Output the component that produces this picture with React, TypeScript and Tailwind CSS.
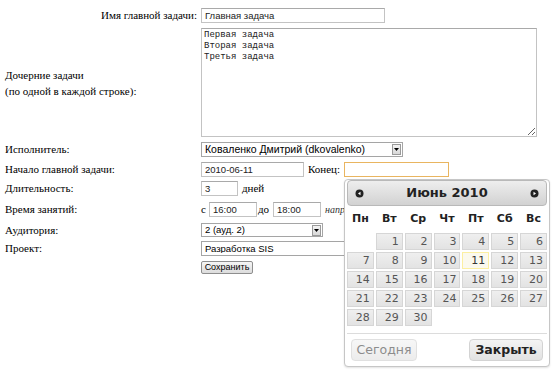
import React from 'react';

const serif = "font-['Liberation_Serif',serif] text-[11px] text-black";
const field =
  "border border-[#c3c3c3] border-t-[#a9a9a9] bg-white px-[3px] font-['Liberation_Sans',sans-serif] text-[9.5px] text-[#222] outline-none";

const FakeSelect = ({ value, width, big }: { value: string; width: string; big?: boolean }) => (
  <div
    className={`flex h-full items-center border border-[#a5a5a5] bg-white pl-[3px] pr-[1px] font-['Liberation_Sans',sans-serif] text-black ${width} ${
      big ? 'text-[10.5px]' : 'text-[9.5px]'
    }`}
  >
    <span className="flex-1 truncate leading-none">{value}</span>
    <span className="flex h-[11px] w-[9px] items-center justify-center border border-[#9a9a9a] bg-gradient-to-b from-[#f4f4f4] to-[#d8d8d8]">
      <svg width="5" height="3" viewBox="0 0 5 3">
        <path d="M0 0h5L2.5 3z" fill="#000" />
      </svg>
    </span>
  </div>
);

const NavIcon = ({ dir }: { dir: 'prev' | 'next' }) => (
  <svg width="9" height="9" viewBox="0 0 9 9">
    <circle cx="4.5" cy="4.5" r="4" fill="#222" />
    {dir === 'prev' ? (
      <path d="M3 4.5 5.5 2.8v3.4z" fill="#fff" />
    ) : (
      <path d="M6 4.5 3.5 2.8v3.4z" fill="#fff" />
    )}
  </svg>
);

const weekDays = ['Пн', 'Вт', 'Ср', 'Чт', 'Пт', 'Сб', 'Вс'];

// June 2010 starts on a Tuesday
const cells: (number | null)[] = [null, ...Array.from({ length: 30 }, (_, i) => i + 1)];

const Datepicker = () => (
  <div className="absolute left-[344px] top-[179px] flex h-[188px] w-[206px] flex-col rounded-[4px] border border-[#c6c6c6] bg-white px-[2px] font-['DejaVu_Sans',sans-serif] shadow-[0_1px_2px_rgba(0,0,0,0.12)]">
    <div className="flex h-[26px] items-center justify-between rounded-[4px] border border-[#b9b9b9] bg-gradient-to-b from-[#eeeeee] to-[#d2d2d2] px-[7px]">
      <NavIcon dir="prev" />
      <span className="text-[13px] font-bold text-[#222]">Июнь 2010</span>
      <NavIcon dir="next" />
    </div>
    <div className="grid h-[27px] grid-cols-7 items-center gap-x-[2px] text-center text-[11px] font-bold text-[#222]">
      {weekDays.map((d) => (
        <span key={d}>{d}</span>
      ))}
    </div>
    <div className="grid grid-cols-7 gap-[2px]">
      {cells.map((n, i) =>
        n === null ? (
          <div key={i} className="h-[17px]" />
        ) : (
          <div
            key={i}
            className={`h-[17px] border pr-[3px] text-right text-[11px] leading-[15px] ${
              n === 11
                ? 'border-[#fcefa1] bg-[#fbf9ee] text-[#363636]'
                : 'border-[#d6d6d6] bg-gradient-to-b from-[#efefef] to-[#e3e3e3] text-[#555]'
            }`}
          >
            {n}
          </div>
        )
      )}
    </div>
    <div className="mt-[7px] flex items-start justify-between border-t border-[#dcdcdc] px-[4px] pt-[5px]">
      <div className="flex h-[22px] w-[66px] items-center justify-center rounded-[4px] border border-[#e0e0e0] bg-gradient-to-b from-[#f7f7f7] to-[#ececec] text-[12.5px] text-[#8c8c8c]">
        Сегодня
      </div>
      <div className="flex h-[22px] w-[74px] items-center justify-center rounded-[4px] border border-[#d3d3d3] bg-gradient-to-b from-[#f4f4f4] to-[#e2e2e2] text-[12.5px] font-bold text-[#222]">
        Закрыть
      </div>
    </div>
  </div>
);

export default function App() {
  return (
    <div className="relative h-[373px] w-[555px] overflow-hidden bg-white">
      <div className="flex flex-col pt-[8px]">
        <div className="flex h-[15px] items-center">
          <span className={`${serif} w-[201px] shrink-0 pr-[4px] text-right`}>Имя главной задачи:</span>
          <input readOnly defaultValue="Главная задача" className={`${field} h-[15px] w-[184px]`} />
        </div>

        <div className="mt-[5px] flex h-[109px] items-center">
          <span className={`${serif} w-[201px] shrink-0 pl-[5px] leading-[16px]`}>
            Дочерние задачи
            <br />
            (по одной в каждой строке):
          </span>
          <textarea
            readOnly
            defaultValue={'Первая задача\nВторая задача\nТретья задача'}
            className="h-[109px] w-[336px] border border-[#c3c3c3] border-t-[#a9a9a9] bg-white px-[2px] pt-[1px] font-['Liberation_Mono',monospace] text-[9px] leading-[11px] text-[#222] outline-none"
          />
        </div>

        <div className="mt-[5px] flex h-[15px] items-center">
          <span className={`${serif} w-[201px] shrink-0 pl-[5px]`}>Исполнитель:</span>
          <FakeSelect value="Коваленко Дмитрий (dkovalenko)" width="w-[202px]" big />
        </div>

        <div className="mt-[5px] flex h-[15px] items-center">
          <span className={`${serif} w-[201px] shrink-0 pl-[5px]`}>Начало главной задачи:</span>
          <input readOnly defaultValue="2010-06-11" className={`${field} h-[15px] w-[103px]`} />
          <span className={`${serif} ml-[4px] w-[36px]`}>Конец:</span>
          <input
            readOnly
            defaultValue=""
            className="h-[15px] w-[105px] border border-[#e9b560] bg-white outline-none"
          />
        </div>

        <div className="mt-[4px] flex h-[15px] items-center">
          <span className={`${serif} w-[201px] shrink-0 pl-[5px]`}>Длительность:</span>
          <input readOnly defaultValue="3" className={`${field} h-[15px] w-[37px]`} />
          <span className={`${serif} ml-[4px]`}>дней</span>
        </div>

        <div className="mt-[6px] flex h-[15px] items-center">
          <span className={`${serif} w-[201px] shrink-0 pl-[5px]`}>Время занятий:</span>
          <span className={`${serif} w-[8px]`}>с</span>
          <input readOnly defaultValue="16:00" className={`${field} h-[15px] w-[48px]`} />
          <span className={`${serif} ml-[1px] w-[15px]`}>до</span>
          <input readOnly defaultValue="18:00" className={`${field} h-[15px] w-[48px]`} />
          <span className="ml-[4px] whitespace-nowrap font-['Liberation_Serif',serif] text-[10px] italic text-[#333]">
            напр
          </span>
        </div>

        <div className="mt-[6px] flex h-[14px] items-center">
          <span className={`${serif} w-[201px] shrink-0 pl-[5px]`}>Аудитория:</span>
          <FakeSelect value="2 (ауд. 2)" width="w-[122px]" />
        </div>

        <div className="mt-[4px] flex h-[15px] items-center">
          <span className={`${serif} w-[201px] shrink-0 pl-[5px]`}>Проект:</span>
          <FakeSelect value="Разработка SIS" width="w-[202px]" />
        </div>

        <div className="mt-[4px] flex h-[14px] items-center">
          <span className="w-[201px] shrink-0" />
          <button className="h-[13px] w-[52px] rounded-[2px] border border-[#8e8e8e] bg-gradient-to-b from-[#f6f6f6] to-[#dcdcdc] font-['Liberation_Sans',sans-serif] text-[9px] leading-[11px] text-black">
            Сохранить
          </button>
        </div>
      </div>

      <Datepicker />
    </div>
  );
}
